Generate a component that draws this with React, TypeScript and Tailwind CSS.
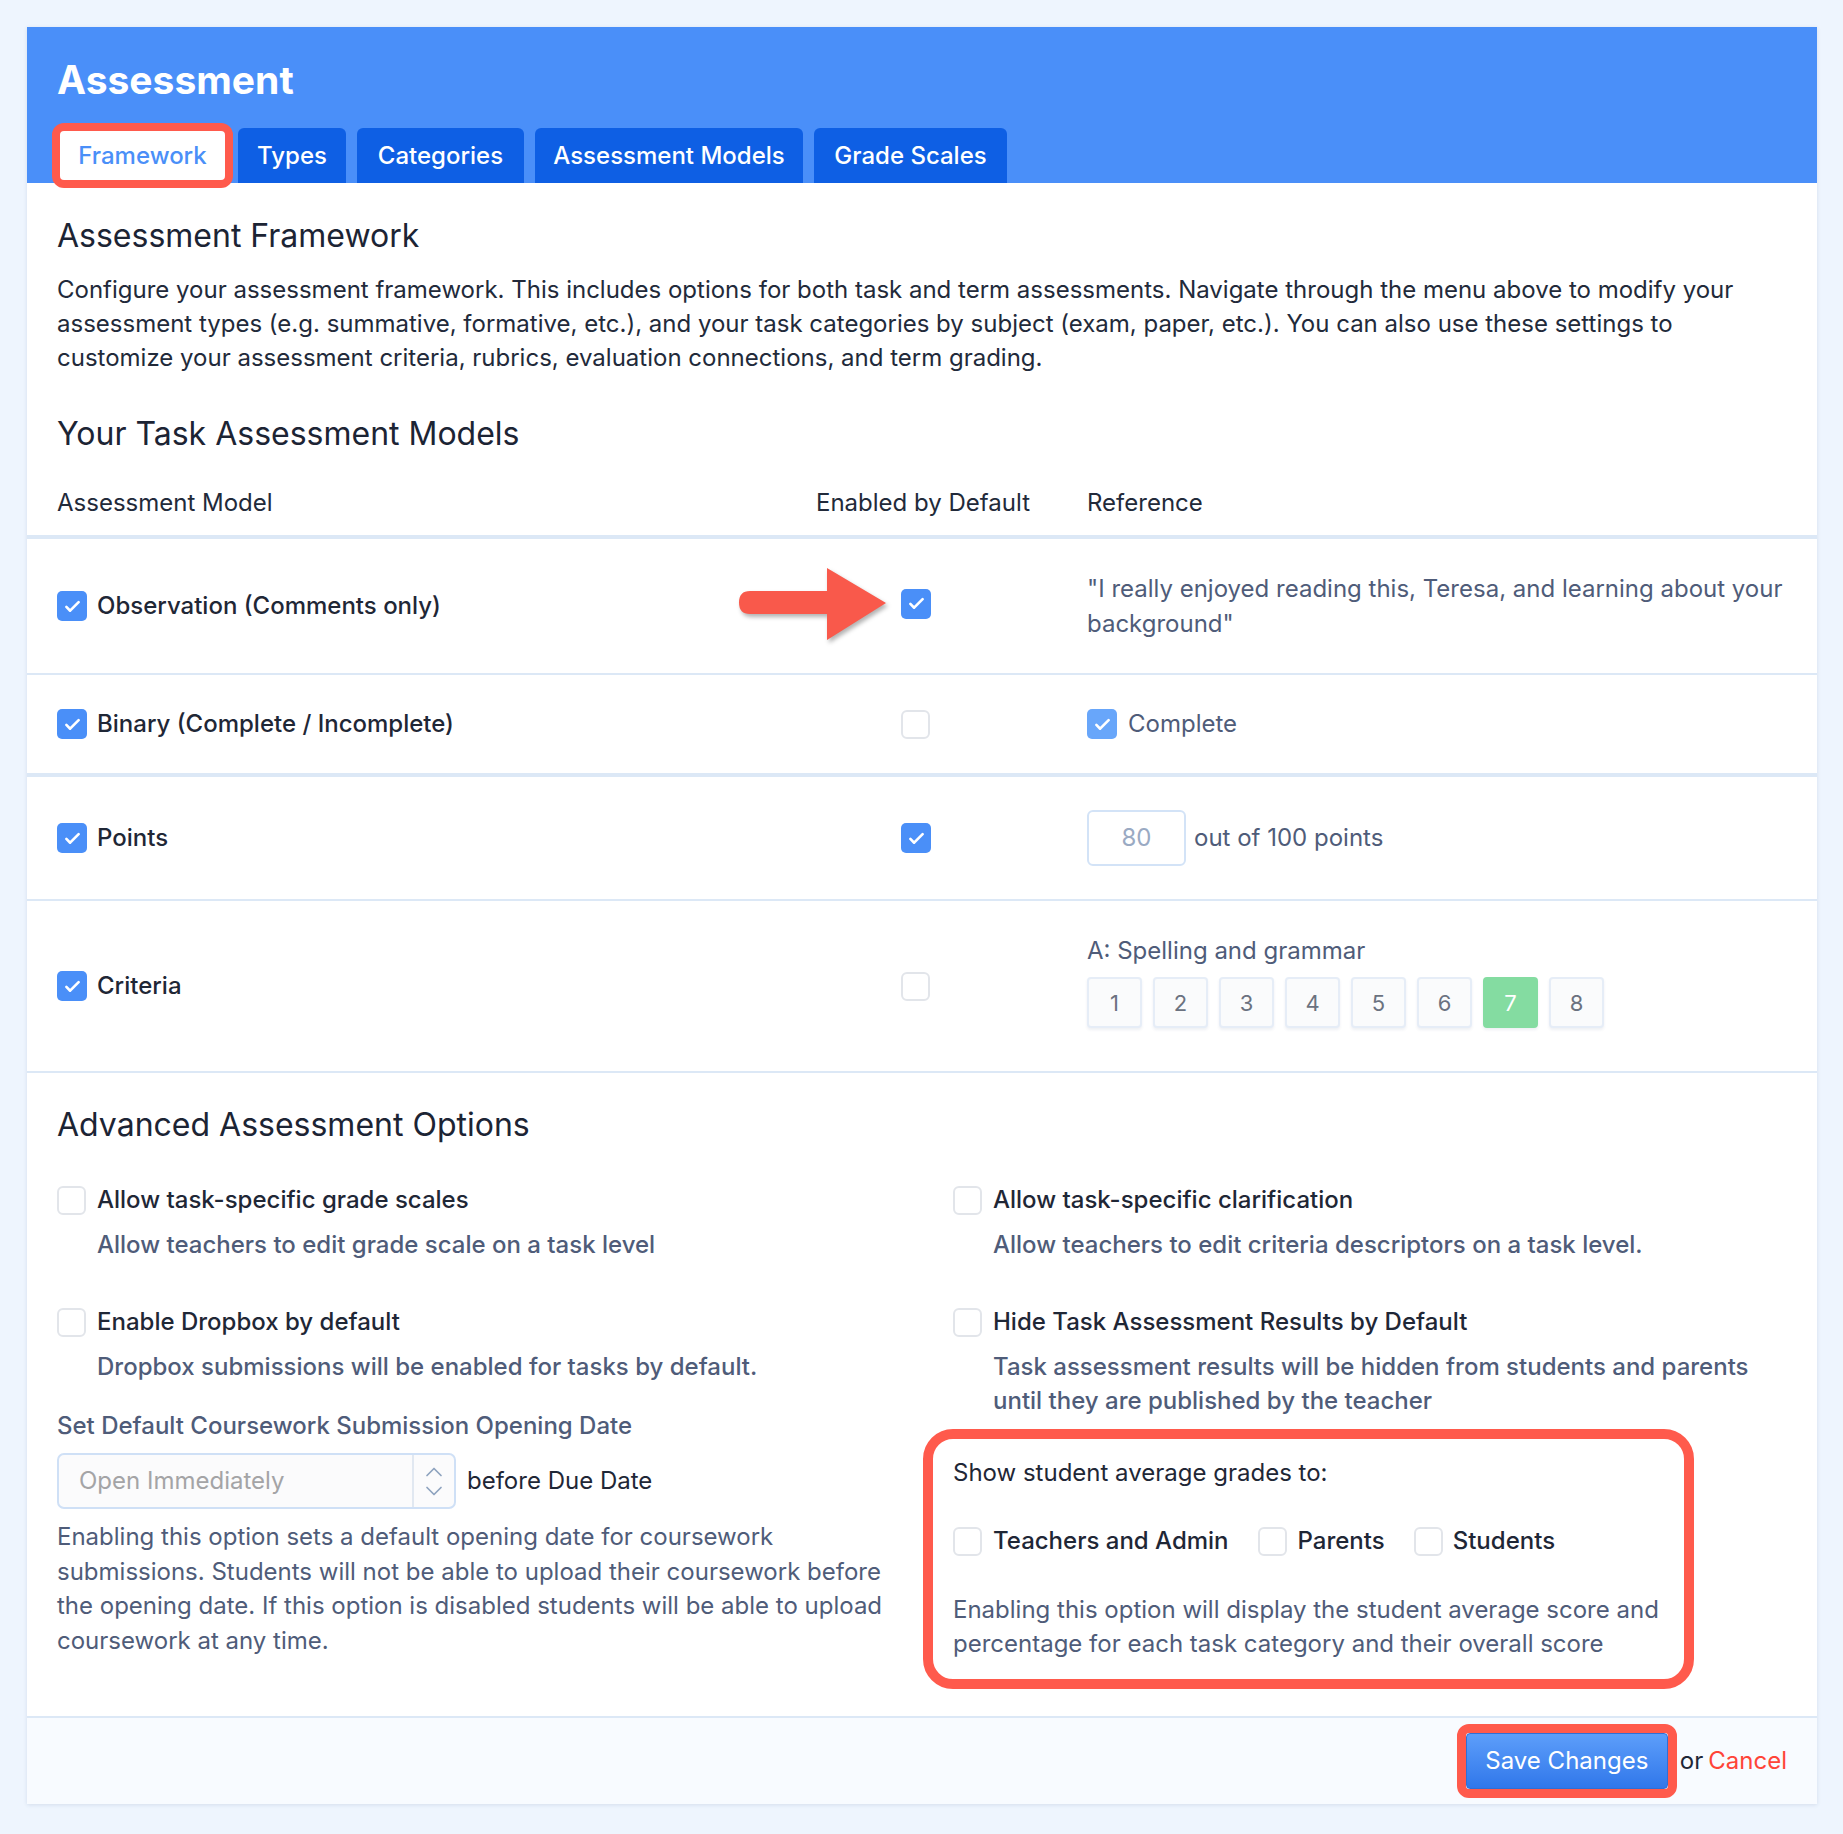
import React from 'react';

const CheckMark = () => (
  <svg viewBox="0 0 24 24" className="w-[21px] h-[21px]" fill="none" stroke="white" strokeWidth={3} strokeLinecap="round" strokeLinejoin="round">
    <path d="M5 12.5l4.3 4.3L19 7" />
  </svg>
);

const Box: React.FC<{ checked?: boolean; light?: boolean }> = ({ checked, light }) =>
  checked ? (
    <span className={`inline-flex shrink-0 w-[30px] h-[30px] rounded-[5px] items-center justify-center ${light ? 'bg-[#68a6fa]' : 'bg-[#4a8ff8]'}`}>
      <CheckMark />
    </span>
  ) : (
    <span className="inline-block shrink-0 w-[29px] h-[29px] rounded-[6px] border-2 border-[#e2e5ea] bg-white" />
  );

const tabs = [
  { label: 'Types', w: 'w-[108px]' },
  { label: 'Categories', w: 'w-[167px]' },
  { label: 'Assessment Models', w: 'w-[268px]' },
  { label: 'Grade Scales', w: 'w-[193px]' },
];

const Option: React.FC<{ label: string; desc: string; className?: string }> = ({ label, desc, className }) => (
  <div className={className}>
    <div className="flex items-center gap-[11px] h-[34px]">
      <Box />
      <span className="font-medium text-[#1f2736]">{label}</span>
    </div>
    <p className="pl-[40px] mt-[11px] text-[#4f5c79] font-medium">{desc}</p>
  </div>
);

export default function App() {
  return (
    <div className="min-h-screen bg-[#eef5fe] p-[27px] pr-[26px] font-[family-name:Inter,sans-serif] text-[24px] leading-[34px] text-[#222a3a]">
      <div className="bg-white shadow-[0_1px_4px_rgba(30,60,110,0.12)]">
        {/* header */}
        <div className="bg-[#4a8ff9] px-[30px] pt-[29px]">
          <h1 className="text-[39px] leading-[48px] font-bold text-white">Assessment</h1>
          <div className="flex items-end gap-[11px] mt-[19px] h-[60px]">
            <div className="relative z-10 -ml-[5px] -mr-[6px] -mb-[5px] w-[181px] h-[65px] rounded-[12px] border-[8px] border-[#ff5a4c] bg-white flex items-center justify-center text-[#4a8ff8] font-medium">
              Framework
            </div>
            {tabs.map((t) => (
              <div key={t.label} className={`${t.w} h-[55px] rounded-t-[6px] bg-[#0e5fe4] text-white font-medium flex items-center justify-center`}>
                {t.label}
              </div>
            ))}
          </div>
        </div>

        {/* intro */}
        <div className="px-[30px] pt-[34px]">
          <h2 className="text-[32px] leading-[38px] text-[#1c2434]">Assessment Framework</h2>
          <p className="mt-[18px]">
            Configure your assessment framework. This includes options for both task and term assessments. Navigate through the menu above to modify your assessment types (e.g. summative, formative, etc.), and your task categories by subject (exam, paper, etc.). You can also use these settings to customize your assessment criteria, rubrics, evaluation connections, and term grading.
          </p>
          <h2 className="mt-[40px] text-[32px] leading-[38px] text-[#1c2434]">Your Task Assessment Models</h2>
        </div>

        {/* models table */}
        <div className="grid grid-cols-[759px_271px_1fr] px-[30px] mt-[33px] pb-[15px] border-b-4 border-[#dce8f6]">
          <div>Assessment Model</div>
          <div>Enabled by Default</div>
          <div>Reference</div>
        </div>

        <div className="relative grid grid-cols-[759px_271px_1fr] items-center pl-[30px] pr-[12px] py-[32px] border-b-2 border-[#dce8f6]">
          <div className="flex items-center gap-[10px]">
            <Box checked />
            <span className="font-medium text-[#1f2736]">Observation (Comments only)</span>
          </div>
          <div className="pl-[85px]">
            <Box checked />
          </div>
          <p className="leading-[35px] text-[#4f5c79]">"I really enjoyed reading this, Teresa, and learning about your background"</p>
          <svg className="absolute left-[711px] top-[29px] drop-shadow-[2px_3px_2px_rgba(0,0,0,0.3)]" width="150" height="72" viewBox="0 0 150 72">
            <path d="M12 23 L89 23 L89 0 L148 35 L89 72 L89 46 L12 46 Q1 46 1 34.5 Q1 23 12 23 Z" fill="#f9594b" />
          </svg>
        </div>

        <div className="grid grid-cols-[759px_271px_1fr] items-center px-[30px] py-[32px] border-b-4 border-[#dce8f6]">
          <div className="flex items-center gap-[10px]">
            <Box checked />
            <span className="font-medium text-[#1f2736]">Binary (Complete / Incomplete)</span>
          </div>
          <div className="pl-[85px] flex">
            <Box />
          </div>
          <div className="flex items-center gap-[11px] text-[#4f5c79]">
            <Box checked light />
            <span>Complete</span>
          </div>
        </div>

        <div className="grid grid-cols-[759px_271px_1fr] items-center px-[30px] py-[33px] border-b-2 border-[#dce8f6]">
          <div className="flex items-center gap-[10px]">
            <Box checked />
            <span className="font-medium text-[#1f2736]">Points</span>
          </div>
          <div className="pl-[85px] flex">
            <Box checked />
          </div>
          <div className="flex items-center gap-[8px] text-[#4f5c79]">
            <div className="w-[99px] h-[56px] rounded-[6px] border-2 border-[#d3e3f7] flex items-center justify-center text-[#9aaac3]">80</div>
            <span>out of 100 points</span>
          </div>
        </div>

        <div className="grid grid-cols-[759px_271px_1fr] items-center px-[30px] py-[33px] border-b-2 border-[#dce8f6]">
          <div className="flex items-center gap-[10px]">
            <Box checked />
            <span className="font-medium text-[#1f2736]">Criteria</span>
          </div>
          <div className="pl-[85px] flex">
            <Box />
          </div>
          <div className="pb-[10px]">
            <div className="text-[#4f5c79]">A: Spelling and grammar</div>
            <div className="flex gap-[11px] mt-[9px]">
              {[1, 2, 3, 4, 5, 6, 7, 8].map((n) => (
                <div
                  key={n}
                  className={`w-[55px] h-[51px] rounded-[4px] border-2 flex items-center justify-center text-[22px] shadow-[0_2px_3px_rgba(40,70,120,0.08)] ${
                    n === 7 ? 'bg-[#84dca1] border-[#84dca1] text-white' : 'bg-[#fafbfc] border-[#e6edf7] text-[#6b7280]'
                  }`}
                >
                  {n}
                </div>
              ))}
            </div>
          </div>
        </div>

        {/* advanced */}
        <div className="px-[30px] pt-[33px] pb-[27px]">
          <h2 className="text-[32px] leading-[38px] text-[#1c2434]">Advanced Assessment Options</h2>
          <div className="grid grid-cols-[896px_1fr] mt-[39px]">
            <div>
              <Option label="Allow task-specific grade scales" desc="Allow teachers to edit grade scale on a task level" />
              <Option className="mt-[43px]" label="Enable Dropbox by default" desc="Dropbox submissions will be enabled for tasks by default." />
              <div className="mt-[25px] font-medium text-[#4f5c79]">Set Default Coursework Submission Opening Date</div>
              <div className="flex items-center mt-[10px]">
                <div className="w-[399px] h-[56px] rounded-[7px] border-2 border-[#cfe0f6] bg-[#fbfbfc] flex">
                  <div className="flex-1 flex items-center pl-[20px] text-[#a4a4a6]">Open Immediately</div>
                  <div className="w-[42px] border-l-2 border-[#e1e8f1] flex flex-col items-center justify-center gap-[9px]">
                    <svg width="18" height="10" viewBox="0 0 18 10" fill="none" stroke="#8ea3bf" strokeWidth="1.7" strokeLinecap="round" strokeLinejoin="round">
                      <path d="M2 8.5 L9 1.5 L16 8.5" />
                    </svg>
                    <svg width="18" height="10" viewBox="0 0 18 10" fill="none" stroke="#8ea3bf" strokeWidth="1.7" strokeLinecap="round" strokeLinejoin="round">
                      <path d="M2 1.5 L9 8.5 L16 1.5" />
                    </svg>
                  </div>
                </div>
                <span className="ml-[11px] text-[#1f2736]">before Due Date</span>
              </div>
              <p className="mt-[11px] w-[850px] leading-[34.5px] text-[#4f5c79]">
                Enabling this option sets a default opening date for coursework submissions. Students will not be able to upload their coursework before the opening date. If this option is disabled students will be able to upload coursework at any time.
              </p>
            </div>
            <div>
              <Option label="Allow task-specific clarification" desc="Allow teachers to edit criteria descriptors on a task level." />
              <Option className="mt-[43px]" label="Hide Task Assessment Results by Default" desc="Task assessment results will be hidden from students and parents until they are published by the teacher" />
              <div className="mt-[11px] -ml-[30px] w-[771px] rounded-[30px] border-[10px] border-[#ff5a4c] pl-[20px] pr-[10px] pt-[17px] pb-[18px]">
                <div className="text-[#1f2736]">Show student average grades to:</div>
                <div className="flex items-center mt-[34px] h-[34px] font-medium text-[#1f2736]">
                  <Box />
                  <span className="ml-[11px]">Teachers and Admin</span>
                  <span className="ml-[29px] flex"><Box /></span>
                  <span className="ml-[11px]">Parents</span>
                  <span className="ml-[29px] flex"><Box /></span>
                  <span className="ml-[10px]">Students</span>
                </div>
                <p className="mt-[35px] text-[#4f5c79]">
                  Enabling this option will display the student average score and percentage for each task category and their overall score
                </p>
              </div>
            </div>
          </div>
        </div>

        {/* footer */}
        <div className="h-[88px] border-t-2 border-[#dce8f6] bg-[#f8fbff] flex items-center justify-end pr-[30px]">
          <div className="rounded-[12px] border-[9px] border-[#ff5a4c]">
            <button className="w-[202px] h-[56px] rounded-[4px] border border-[#2f6fd6] bg-gradient-to-b from-[#5d9efa] to-[#3077ea] text-white text-[24px]">
              Save Changes
            </button>
          </div>
          <span className="ml-[3px] text-[#1f2736]">or</span>
          <span className="ml-[5px] text-[#ff4438]">Cancel</span>
        </div>
      </div>
    </div>
  );
}
